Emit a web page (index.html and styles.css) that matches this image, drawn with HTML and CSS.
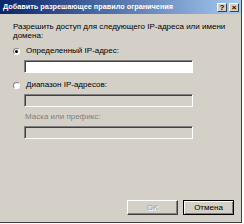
FILE: index.html
```html
<!DOCTYPE html>
<html lang="ru">
<head>
    <meta charset="UTF-8">
    <title>Добавить разрешающее правило ограничения</title>
    <link rel="stylesheet" href="styles.css">
</head>
<body>
    <div class="window">
        <div class="titlebar">
            <span class="title">Добавить разрешающее правило ограничения</span>
            <span class="tbtn help">?</span>
            <span class="tbtn close">×</span>
        </div>
        <div class="content">
            <p class="intro">Разрешить доступ для следующего IP-адреса или имени домена:</p>
            <label class="radio-row">
                <span class="radio checked"></span>
                <span>Определенный IP-адрес:</span>
            </label>
            <div class="field"></div>
            <label class="radio-row second">
                <span class="radio"></span>
                <span>Диапазон IP-адресов:</span>
            </label>
            <div class="field disabled"></div>
            <p class="sublabel">Маска или префикс:</p>
            <div class="field disabled"></div>
            <div class="buttons">
                <span class="btn off">OK</span>
                <span class="btn def">Отмена</span>
            </div>
        </div>
    </div>
</body>
</html>
```

FILE: styles.css
```css
*{
    margin: 0;
    padding: 0;
    box-sizing: border-box;
}
body{
    width: 244px;
    height: 224px;
    background: #fff;
    font: 8px/10px "Liberation Sans", Arial, sans-serif;
    color: #000;
}
.window{
    width: 242px;
    height: 223px;
    background: #d4d0c8;
    border-right: 1px solid #404040;
    border-bottom: 1px solid #404040;
    display: flex;
    flex-direction: column;
}
.titlebar{
    height: 15px;
    display: flex;
    align-items: center;
    padding: 0 2px 0 3px;
    background: linear-gradient(to right, #0a246a, #a6caf0);
    border-bottom: 1px solid #d4d0c8;
}
.title{
    flex: 1;
    min-width: 0;
    color: #fff;
    font-weight: bold;
    font-size: 7.3px;
    white-space: nowrap;
}
.tbtn{
    flex: none;
    width: 10px;
    height: 9px;
    margin-left: 2px;
    background: #d4d0c8;
    border: 1px solid;
    border-color: #fff #404040 #404040 #fff;
    font: bold 8px/7px "Liberation Sans", Arial, sans-serif;
    text-align: center;
    color: #000;
}
.content{
    flex: 1;
    padding: 7px 0 7px 13px;
    display: flex;
    flex-direction: column;
}
.intro{
    width: 215px;
    line-height: 9px;
    margin-bottom: 6px;
}
.radio-row{
    display: flex;
    align-items: center;
    gap: 6px;
    height: 10px;
}
.radio-row.second{
    margin-top: 7px;
}
.radio{
    width: 7px;
    height: 7px;
    border-radius: 50%;
    background: #fff;
    border: 1px solid;
    border-color: #808080 #fff #fff #808080;
    position: relative;
}
.radio.checked::after{
    content: "";
    position: absolute;
    left: 1px;
    top: 1px;
    width: 3px;
    height: 3px;
    border-radius: 50%;
    background: #000;
}
.field{
    width: 169px;
    height: 13px;
    margin: 4px 0 0 11px;
    background: #fff;
    border: 1px solid;
    border-color: #808080 #fff #fff #808080;
    box-shadow: inset 1px 1px 0 #404040;
}
.field.disabled{
    background: #d4d0c8;
}
.sublabel{
    margin: 5px 0 0 12px;
    color: #808080;
}
.buttons{
    margin-top: auto;
    display: flex;
    justify-content: flex-end;
    gap: 5px;
    padding-right: 7px;
}
.btn{
    width: 51px;
    height: 15px;
    border: 1px solid;
    border-color: #fff #404040 #404040 #fff;
    box-shadow: inset -1px -1px 0 #808080;
    text-align: center;
    line-height: 13px;
}
.btn.off{
    color: #a0a0a0;
    text-shadow: 1px 1px 0 #fff;
}
.btn.def{
    border-color: #000;
    box-shadow: inset 1px 1px 0 #fff, inset -1px -1px 0 #808080;
}
```
